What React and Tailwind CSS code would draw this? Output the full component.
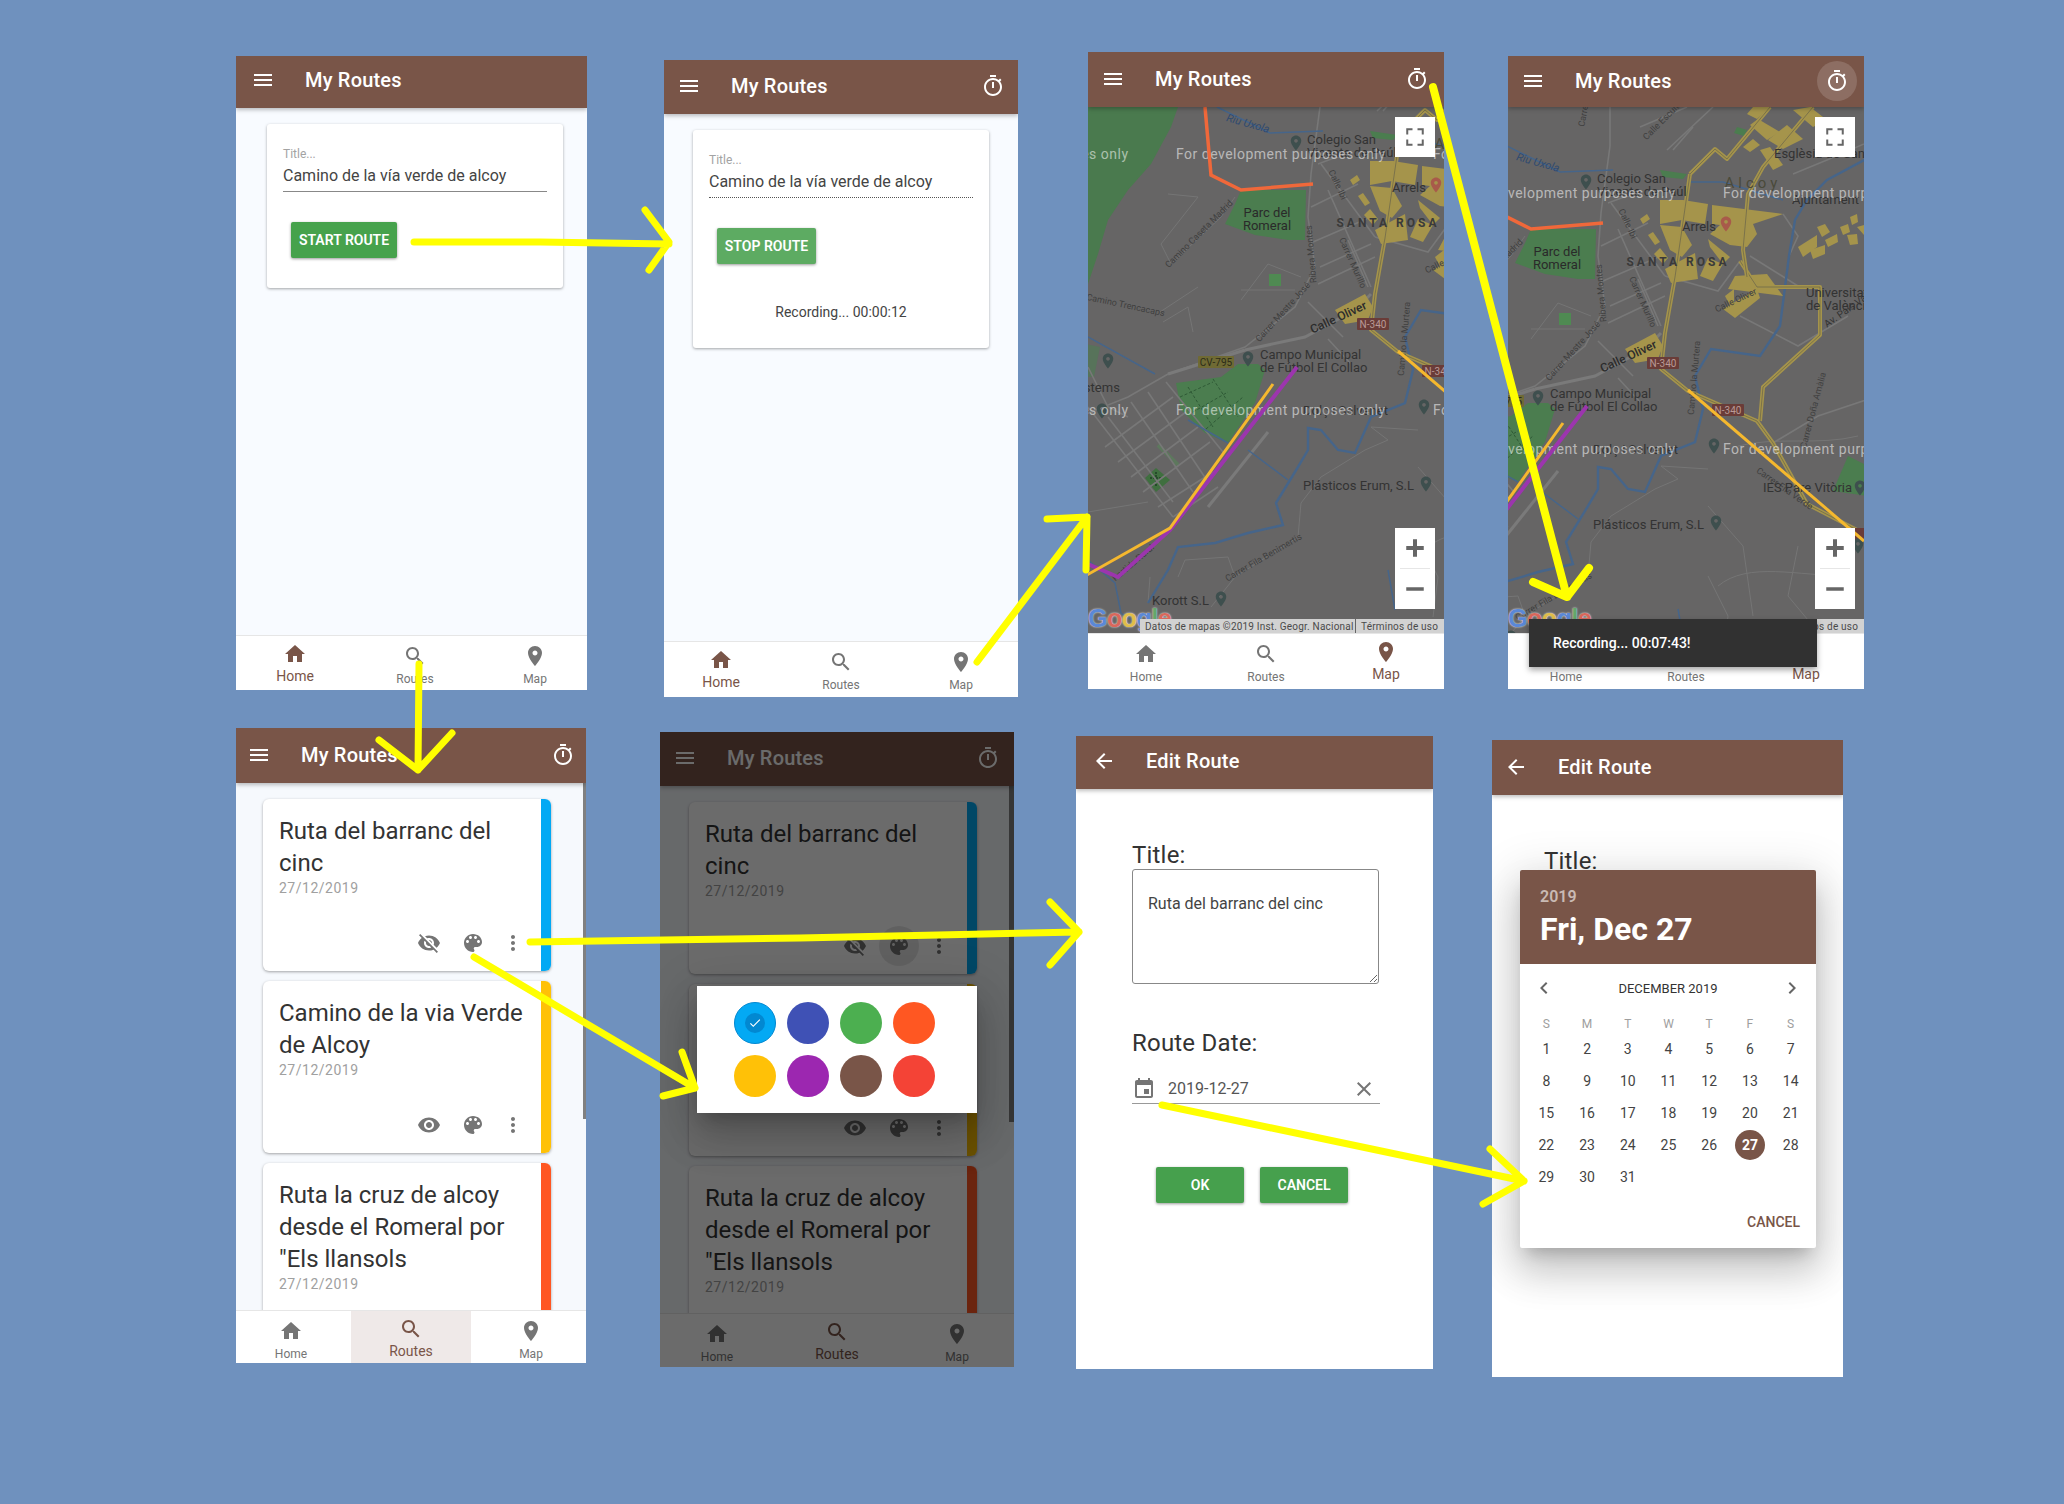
import React from 'react';

const ICONS = {
  menu: 'M3 18h18v-2H3v2zm0-5h18v-2H3v2zm0-7v2h18V6H3z',
  timer:
    'M15 1H9v2h6V1zm-4 13h2V8h-2v6zm8.03-6.61l1.42-1.42c-.43-.51-.9-.99-1.41-1.41l-1.42 1.42C16.07 4.74 14.12 4 12 4c-4.97 0-9 4.03-9 9s4.02 9 9 9 9-4.03 9-9c0-2.12-.74-4.07-1.97-5.61zM12 20c-3.87 0-7-3.13-7-7s3.13-7 7-7 7 3.13 7 7-3.13 7-7 7z',
  home: 'M10 20v-6h4v6h5v-8h3L12 3 2 12h3v8z',
  search:
    'M15.5 14h-.79l-.28-.27C15.41 12.59 16 11.11 16 9.5 16 5.91 13.09 3 9.5 3S3 5.91 3 9.5 5.91 16 9.5 16c1.61 0 3.09-.59 4.23-1.57l.27.28v.79l5 4.99L20.49 19l-4.99-5zm-6 0C7.01 14 5 11.99 5 9.5S7.01 5 9.5 5 14 7.01 14 9.5 11.99 14 9.5 14z',
  room: 'M12 2C8.13 2 5 5.13 5 9c0 5.25 7 13 7 13s7-7.75 7-13c0-3.87-3.13-7-7-7zm0 9.5c-1.38 0-2.5-1.12-2.5-2.5s1.12-2.5 2.5-2.5 2.5 1.12 2.5 2.5-1.12 2.5-2.5 2.5z',
  eye: 'M12 4.5C7 4.5 2.73 7.61 1 12c1.73 4.39 6 7.5 11 7.5s9.27-3.11 11-7.5c-1.73-4.39-6-7.5-11-7.5zM12 17c-2.76 0-5-2.24-5-5s2.24-5 5-5 5 2.24 5 5-2.24 5-5 5zm0-8c-1.66 0-3 1.34-3 3s1.34 3 3 3 3-1.34 3-3-1.34-3-3-3z',
  eyeOff:
    'M12 7c2.76 0 5 2.24 5 5 0 .65-.13 1.26-.36 1.83l2.92 2.92c1.51-1.26 2.7-2.89 3.43-4.75-1.73-4.39-6-7.5-11-7.5-1.4 0-2.74.25-3.98.7l2.16 2.16C10.74 7.13 11.35 7 12 7zM2 4.27l2.28 2.28.46.46C3.08 8.3 1.78 10.02 1 12c1.73 4.39 6 7.5 11 7.5 1.55 0 3.03-.3 4.38-.84l.42.42L19.73 22 21 20.73 3.27 3 2 4.27zM7.53 9.8l1.55 1.55c-.05.21-.08.43-.08.65 0 1.66 1.34 3 3 3 .22 0 .44-.03.65-.08l1.55 1.55c-.67.33-1.41.53-2.2.53-2.76 0-5-2.24-5-5 0-.79.2-1.53.53-2.2zm4.31-.78l3.15 3.15.02-.16c0-1.66-1.34-3-3-3l-.17.01z',
  palette:
    'M12 3c-4.97 0-9 4.03-9 9s4.03 9 9 9c.83 0 1.5-.67 1.5-1.5 0-.39-.15-.74-.39-1.01-.23-.26-.38-.61-.38-.99 0-.83.67-1.5 1.5-1.5H16c2.76 0 5-2.24 5-5 0-4.42-4.03-8-9-8zm-5.5 9c-.83 0-1.5-.67-1.5-1.5S5.67 9 6.5 9 8 9.67 8 10.5 7.33 12 6.5 12zm3-4C8.67 8 8 7.33 8 6.5S8.67 5 9.5 5s1.5.67 1.5 1.5S10.33 8 9.5 8zm5 0c-.83 0-1.5-.67-1.5-1.5S13.67 5 14.5 5s1.5.67 1.5 1.5S15.33 8 14.5 8zm3 4c-.83 0-1.5-.67-1.5-1.5S16.67 9 17.5 9s1.5.67 1.5 1.5-.67 1.5-1.5 1.5z',
  more: 'M12 8c1.1 0 2-.9 2-2s-.9-2-2-2-2 .9-2 2 .9 2 2 2zm0 2c-1.1 0-2 .9-2 2s.9 2 2 2 2-.9 2-2-.9-2-2-2zm0 6c-1.1 0-2 .9-2 2s.9 2 2 2 2-.9 2-2-.9-2-2-2z',
  back: 'M20 11H7.83l5.59-5.59L12 4l-8 8 8 8 1.41-1.41L7.83 13H20v-2z',
  event:
    'M17 12h-5v5h5v-5zM16 1v2H8V1H6v2H5c-1.11 0-1.99.9-1.99 2L3 19c0 1.1.89 2 2 2h14c1.1 0 2-.9 2-2V5c0-1.1-.9-2-2-2h-1V1h-2zm3 18H5V8h14v11z',
  close:
    'M19 6.41L17.59 5 12 10.59 6.41 5 5 6.41 10.59 12 5 17.59 6.41 19 12 13.41 17.59 19 19 17.59 13.41 12z',
  left: 'M15.41 7.41L14 6l-6 6 6 6 1.41-1.41L10.83 12z',
  right: 'M10 6L8.59 7.41 13.17 12l-4.58 4.59L10 18l6-6z',
  check: 'M9 16.17L4.83 12l-1.42 1.41L9 19 21 7l-1.41-1.41z',
  fullscreen: 'M5 10V5h5v1.6H6.6V10zM19 10V5h-5v1.6h3.4V10zM5 14v5h5v-1.6H6.6V14zM19 14v5h-5v-1.6h3.4V14z',
  plus: 'M19 13.6h-5.4V19h-3.2v-5.4H5v-3.2h5.4V5h3.2v5.4H19z',
  minus: 'M19 13.4H5v-2.8h14z',
};

const Icon = ({ name, className = 'w-6 h-6' }) => (
  <svg viewBox="0 0 24 24" fill="currentColor" className={`block shrink-0 ${className}`}>
    <path d={ICONS[name]} />
  </svg>
);

const Phone = ({ className, children }) => (
  <div className={`relative flex shrink-0 flex-col overflow-hidden ${className}`}>{children}</div>
);

const AppBar = ({ className, title = 'My Routes', icon = 'menu', timer = false, timerRing = false }) => (
  <div className={`relative z-10 flex shrink-0 items-center gap-[30px] bg-[#795548] text-white shadow-[0_2px_4px_rgba(0,0,0,0.25)] ${className}`}>
    <Icon name={icon} />
    <span className="text-[20px] font-medium tracking-[0.2px]">{title}</span>
    {timer && (
      <div className={`ml-auto flex h-10 w-10 items-center justify-center rounded-full ${timerRing ? 'bg-white/15' : ''}`}>
        <Icon name="timer" />
      </div>
    )}
  </div>
);

const NavItem = ({ icon, label, active, shaded }) => (
  <div
    className={`flex w-[120px] flex-col items-center ${active ? 'pt-[6px] text-[#795548]' : 'pt-[8px] text-[#757575]'} ${
      shaded ? 'bg-[#efe9e8]' : ''
    }`}
  >
    <Icon name={icon} />
    <span className={active ? 'mt-[1px] text-[14px] leading-[18px]' : 'mt-[3px] text-[12px] leading-[16px]'}>{label}</span>
  </div>
);

const BottomNav = ({ className, active, shaded }) => (
  <div className={`relative z-0 flex shrink-0 border-t border-[#e6e6e6] bg-white ${className}`}>
    <div className="flex w-[360px] shrink-0">
      <NavItem icon="home" label="Home" active={active === 'home'} />
      <NavItem icon="search" label="Routes" active={active === 'routes'} shaded={shaded} />
      <NavItem icon="room" label="Map" active={active === 'map'} />
    </div>
  </div>
);

const ROUTES = [
  { title: 'Ruta del barranc del cinc', bar: 'bg-[#03a9f4]', eye: 'eyeOff' },
  { title: 'Camino de la via Verde de Alcoy', bar: 'bg-[#ffc107]', eye: 'eye' },
  { title: 'Ruta la cruz de alcoy desde el Romeral por "Els llansols', bar: 'bg-[#ff5722]', eye: 'eye', tall: true },
];

const RouteCard = ({ route, ring }) => (
  <div className={`flex shrink-0 overflow-hidden rounded-[6px] bg-white shadow-[0_1px_3px_rgba(0,0,0,0.35)] ${route.tall ? 'h-[204px]' : 'h-[172px]'}`}>
    <div className="flex min-w-0 flex-1 flex-col pb-[16px] pl-[16px] pr-[16px] pt-[16px]">
      <div className="text-[24px] leading-[32px] text-[#333]">{route.title}</div>
      <div className="-mt-[1px] text-[14px] leading-[20px] tracking-[0.5px] text-[#a0a0a0]">27/12/2019</div>
      <div className="mt-auto flex justify-end text-[#757575]">
        <Icon name={route.eye} />
        <div className="relative ml-[20px]">
          {ring && <div className="absolute -inset-2 rounded-full bg-black/10" />}
          <Icon name="palette" className="relative h-6 w-6" />
        </div>
        <Icon name="more" className="ml-[16px] h-6 w-6" />
      </div>
    </div>
    <div className={`w-[10px] shrink-0 ${route.bar}`} />
  </div>
);

const RouteList = ({ className, ring, scroll }) => (
  <div className="relative min-h-0 flex-1 overflow-hidden bg-[#f6f9fd]">
    <div className={`flex w-[288px] flex-col gap-[10px] pt-[16px] ${className}`}>
      {ROUTES.map((route, i) => (
        <RouteCard key={route.title} route={route} ring={ring && i === 0} />
      ))}
    </div>
    <div className={`absolute right-0 top-0 h-[336px] bg-[#808080] ${scroll}`} />
  </div>
);

const GreenButton = ({ className, children }) => (
  <div className={`flex h-9 items-center justify-center rounded-[2px] text-[14px] font-semibold text-white shadow-[0_1px_3px_rgba(0,0,0,0.4)] ${className}`}>
    {children}
  </div>
);

const TitleCard = ({ className, dashed, children }) => (
  <div className={`w-[296px] rounded-[3px] bg-white px-[16px] pt-[22px] shadow-[0_1px_3px_rgba(0,0,0,0.35)] ${className}`}>
    <div className="text-[12px] leading-[16px] text-[#a3a3a3]">Title...</div>
    <div className={`h-[30px] pt-[2px] text-[16px] leading-[24px] text-[#444] ${dashed ? 'border-b border-dotted border-[#555]' : 'border-b border-[#888]'}`}>
      Camino de la vía verde de alcoy
    </div>
    {children}
  </div>
);

// map drawing, coordinates are the "world" of the 356x526 map pane
const ROADS = [
  'M232,-40 L232,0 L223,67 L220,110 L227,160 L207,200 L157,240 L80,267 L40,290 L-60,330',
  'M233,57 L287,130',
  'M240,83 L283,180',
  'M260,133 L280,180',
  'M223,100 L270,77',
  'M225,135 L283,110',
  'M230,177 L287,150',
  'M232,160 L283,137',
  'M230,57 L262,45',
  'M287,130 L340,145 L362,115',
  'M220,195 L255,230',
  'M240,232 L262,256',
  'M262,-19 L309,-39',
  'M289,4 L335,-39',
  'M295,4 L315,-19',
  'M415,28 L449,14 L486,-2',
  'M372,110 L420,140',
  'M405,68 L420,90 L411,110',
  'M362,170 L420,200 L470,170',
  'M395,297 L440,270 L500,250',
  'M0,260 L20,300 L40,310',
  'M20,310 L85,395',
  'M43,295 L105,385',
  'M60,285 L120,375',
  'M78,275 L135,345',
  'M17,340 L85,290',
  'M30,355 L98,305',
  'M43,370 L110,320',
  'M55,385 L122,335',
  'M70,400 L125,365',
  'M85,410 L130,380',
  'M0,300 L85,410',
];

const MAIN_ROADS = ['M157,243 L217,230 L267,203 L283,187', 'M80,267 L157,243', 'M120,400 L180,325'];

const FAINT = [
  'M80,87 L110,90 L73,137 L83,157 L133,110 L147,90',
  'M153,193 L180,157 L213,170 M153,183 L207,183',
  'M72,205 L110,180 M75,215 L100,200 L105,225',
  'M90,470 L97,453 L140,450 L147,470 L123,500',
  'M147,470 L210,430 L213,396 L233,370 L277,343 L300,333 L283,320 L330,323',
  'M0,405 L60,395',
  'M340,440 C370,415 420,430 470,430',
  'M330,430 L350,470 L345,510',
  'M360,300 C400,290 440,300 480,290',
  'M420,400 L410,450 L460,510',
  'M330,360 L365,400 L375,470',
  'M60,496 L62,470',
];

const RIVERS = [
  'M60,496 L80,463 L90,440 L127,436 L160,426 L195,418 L188,396 L210,360 L220,343 L220,321 L233,323 L250,343 L267,346 L283,310 L317,296 L325,263 L317,230 L333,203 L382,210 L402,180 L411,110 L417,74 L429,54 L449,34 L490,12',
  'M160,343 L200,373',
  'M0,453 L27,476 L33,506 L43,513',
  'M0,230 L67,267',
  'M100,313 L140,336',
  'M129,0 L182,26 L235,24',
  'M300,463 L307,503',
  'M312,36 L345,36 L405,54',
];

const HIGHWAY = [
  'M312,28 L297,131 L287,187 L283,223 L310,245 L379,275 L395,297 L429,358 L479,384 L520,400',
  'M362,115 L379,141 L442,141 L442,189 L385,241 L382,275',
  'M312,28 L337,3 L349,13 L392,-39',
  'M435,-39 L385,21 L370,48 L365,104 L369,131',
];

const BLOCKS = [
  '282,54 305,54 330,58 327,78 304,74 282,78',
  '334,59 405,68 375,78 379,88 369,101 352,99 332,88 342,79 334,78',
  '282,79 304,81 314,99 304,111 292,104',
  '269,68 272,73 265,78 262,73',
  '275,86 282,96 277,99 270,89',
  '282,102 290,112 285,118 276,108',
  '330,93 352,111 345,118 332,101',
  '287,123 317,107 320,133 293,137',
  '380,-27 402,-14 389,-6 372,-21',
  '409,-21 425,-7 405,3 390,-6',
  '415,-36 432,-39 449,-26 435,-19',
  '365,1 375,-7 382,-1 372,6',
  '382,4 392,1 405,19 395,24',
  '375,-39 392,-39 379,-27 369,-32',
  '420,101 439,89 439,101 425,111',
  '439,81 447,78 452,86 444,91',
  '447,94 459,88 460,96 450,101',
  '432,104 447,99 447,108 435,113',
  '462,81 470,78 472,86 465,89',
  '472,71 479,68 480,76 474,79',
  '469,89 479,88 480,98 472,99',
  '479,81 486,79 486,89',
  '247,203 277,187 285,200 280,213 257,217',
  '347,150 356,143 356,167',
  '357,130 389,128 405,150 350,143',
  '345,163 379,143 382,152 357,172',
  '330,112 345,118 335,135 322,130',
];

const PARKS = [
  ['M-60,-60 L95,-60 L90,0 L83,20 L63,57 L40,83 L20,113 L10,147 L0,177 L-60,220 Z', '#4a7a4e'],
  ['M153,83 L218,83 L217,133 L200,133 L167,128 L137,117 L147,97 Z', '#4b7d4f'],
  ['M88,276 L133,270 L150,257 L170,257 L177,263 L167,296 L140,336 L117,326 L93,303 Z', '#4b7d4f'],
  ['M68,361 L82,373 L68,385 L57,371 Z', '#3f6f3f'],
  ['M181,167 H193 V179 H181 Z', '#4f8a52'],
  ['M455,345 L470,310 L490,320 L490,350 Z', '#4b7d4f'],
  ['M-60,225 L12,240 L6,270 L-60,270 Z', '#57735a'],
  ['M282,24 L309,28 L305,33 L285,31 Z', '#4b7d4f'],
  ['M359,-19 L369,-16 L366,-10 L356,-13 Z', '#4b7d4f'],
];

const Poi = ({ x, y, fill = '#3e4f4e' }) => (
  <g transform={`translate(${x - 9},${y - 9}) scale(0.75)`}>
    <path d={ICONS.room} fill={fill} />
  </g>
);

const PLACES = [
  ['Colegio San', 219, 37],
  ['Vicente de Paúl', 219, 50],
  ['Arrels', 304, 85],
  ['Campo Municipal', 172, 252],
  ['de Fútbol El Collao', 172, 265],
  ['Plásticos Erum, S.L', 215, 383],
  ['Korott S.L', 64, 498],
  ['Dolç i Salvenet', 215, 308],
  ['Esglèsia de San', 396, 12],
  ['Ajuntament', 414, 58],
  ['Universitat', 428, 151],
  ['de València', 428, 164],
  ['IES Pare Vitòria', 385, 346],
  ['Systems', -18, 285],
  ['Trabi', -30, 257],
];

const STREETS = [
  ['Calle Ibi', 247, 79, 65],
  ['Camino Caseta Madrid', 113, 129, -45],
  ['Carrer Murillo', 262, 157, 66],
  ['Carrer Mestre José', 197, 207, -48],
  ['Ribera Montes', 226, 147, -95],
  ['Camino Trencacaps', 37, 201, 12],
  ['Carrer Fila Benimertis', 177, 453, -30],
  ['Partida Rural', 47, 458, -40],
  ['Camino la Murtera', 319, 232, -85],
  ['Carrer Fila Verde', 405, 345, 35],
  ['Carrer Doña Amàlia', 438, 265, -75],
  ['Calle Oliver', 359, 157, -25],
  ['Calle Escultor', 288, -25, -45],
  ['Carrer Mur', 210, -40, -80],
];

const MapPane = ({ viewBox }) => (
  <div className="relative min-h-0 flex-1 overflow-hidden bg-[#666565]">
    <svg viewBox={viewBox} className="block h-[526px] w-[356px]">
      {PARKS.map(([d, fill]) => (
        <path key={d} d={d} fill={fill} />
      ))}
      <path d="M92,290 L125,275 M105,305 L140,285 M118,322 L155,290 M100,280 L125,320 M125,272 L150,310" fill="none" stroke="#2f5a36" strokeWidth="1" strokeDasharray="3 2" />
      <path d="M62,371 L74,371 M68,365 L68,380" stroke="#264a2a" strokeWidth="2" strokeDasharray="2 1" />
      <path d="M70,338 L90,358" stroke="#5d785d" strokeWidth="4" />
      {FAINT.map((d) => (
        <path key={d} d={d} fill="none" stroke="#757575" strokeWidth="1" />
      ))}
      {ROADS.map((d) => (
        <path key={d} d={d} fill="none" stroke="#787878" strokeWidth="1.6" />
      ))}
      {MAIN_ROADS.map((d) => (
        <path key={d} d={d} fill="none" stroke="#7a7a7a" strokeWidth="3" />
      ))}
      {RIVERS.map((d, i) => (
        <path key={d} d={d} fill="none" stroke="#46658a" strokeWidth={i === 0 ? 2.4 : 1.5} />
      ))}
      {BLOCKS.map((p) => (
        <polygon key={p} points={p} fill="#a5944b" />
      ))}
      {HIGHWAY.map((d) => (
        <g key={d} fill="none" strokeLinejoin="round">
          <path d={d} stroke="#a5944b" strokeWidth="4" />
          <path d={d} stroke="#70694a" strokeWidth="0.8" />
        </g>
      ))}

      <rect x="110" y="249" width="36" height="12" rx="1" fill="#6f6a34" />
      <text x="128" y="259" textAnchor="middle" fontSize="10" fill="#2c2c18">CV-795</text>
      <rect x="269" y="211" width="32" height="12" rx="1" fill="#6a3c38" />
      <text x="285" y="221" textAnchor="middle" fontSize="10" fill="#b99a96">N-340</text>
      <rect x="334" y="258" width="32" height="12" rx="1" fill="#6a3c38" />
      <text x="350" y="268" textAnchor="middle" fontSize="10" fill="#b99a96">N-340</text>
      <rect x="472" y="382" width="32" height="12" rx="1" fill="#6a3c38" />

      {STREETS.map(([t, x, y, r]) => (
        <text key={t} x={x} y={y} fontSize="9" fill="#3f3f3f" textAnchor="middle" transform={`rotate(${r} ${x} ${y})`}>
          {t}
        </text>
      ))}
      {PLACES.map(([t, x, y]) => (
        <text key={t} x={x} y={y} fontSize="13" fill="#333">
          {t}
        </text>
      ))}
      <text x="179" y="110" textAnchor="middle" fontSize="13" fill="#2a2a2a">Parc del</text>
      <text x="179" y="123" textAnchor="middle" fontSize="13" fill="#2a2a2a">Romeral</text>
      <text x="300" y="120" textAnchor="middle" fontSize="12" fontWeight="700" letterSpacing="3" fill="#3a3a3a">SANTA ROSA</text>
      <text x="375" y="42" textAnchor="middle" fontSize="15" letterSpacing="4" fill="#4a4a3a">Alcoy</text>
      <text x="252" y="214" textAnchor="middle" fontSize="12" fontWeight="500" fill="#2c2c2c" transform="rotate(-25 252 214)">Calle Oliver</text>
      <text x="480" y="160" textAnchor="middle" fontSize="10" fill="#333" transform="rotate(-35 480 160)">Av. País Valencià</text>
      <text x="159" y="20" textAnchor="middle" fontSize="11" fontStyle="italic" fill="#2f4a70" transform="rotate(16 159 20)">Riu Uxola</text>

      <Poi x={208} y={36} />
      <Poi x={160} y={252} />
      <Poi x={20} y={254} />
      <Poi x={14} y={304} />
      <Poi x={336} y={300} />
      <Poi x={338} y={377} />
      <Poi x={133} y={492} />
      <Poi x={348} y={78} fill="#a85a4a" />
      <Poi x={482} y={342} />
      <Poi x={480} y={400} />

      {[-169, 88, 345, 602].map((x) => (
        <g key={x} fontSize="14" fill="#ffffff" fillOpacity="0.55">
          <text x={x} y="52" textLength="209">For development purposes only</text>
          <text x={x} y="308" textLength="209">For development purposes only</text>
        </g>
      ))}

      <path d="M117,0 L123,68 L153,83 L225,77" fill="none" stroke="#f0683a" strokeWidth="3.5" />
      <path d="M-40,440 L30,470 L82,423 L209,260" fill="none" stroke="#9c35ae" strokeWidth="4" />
      <path d="M-40,490 L82,421 L185,277" fill="none" stroke="#f5b82e" strokeWidth="3" />
      <path d="M310,244 L486,395" fill="none" stroke="#f5b82e" strokeWidth="3" />
    </svg>

    <div className="absolute bottom-0 left-0 font-['Liberation_Sans',sans-serif] text-[25px] font-bold leading-[30px] tracking-[-0.5px] [text-shadow:0_0_2px_#fff]">
      <span className="text-[#5b88d6]">G</span>
      <span className="text-[#d9685c]">o</span>
      <span className="text-[#e0bd4a]">o</span>
      <span className="text-[#5b88d6]">g</span>
      <span className="text-[#63a86c]">l</span>
      <span className="text-[#d9685c]">e</span>
    </div>
    <div className="absolute bottom-0 right-0 flex h-[14px] w-[304px] items-center bg-[#d2d2d2] pl-[5px] text-[10px] tracking-[0.2px] text-[#4a4a4a]">
      <span className="w-[210px] shrink-0 whitespace-nowrap">Datos de mapas ©2019 Inst. Geogr. Nacional</span>
      <span className="h-full w-px shrink-0 bg-[#666]" />
      <span className="ml-[5px] whitespace-nowrap">Términos de uso</span>
    </div>
    <div className="absolute right-[9px] top-[10px] flex h-10 w-10 items-center justify-center bg-white text-[#666]">
      <Icon name="fullscreen" className="h-[30px] w-[30px]" />
    </div>
    <div className="absolute bottom-[24px] right-[9px] flex h-[81px] w-10 flex-col items-center bg-white text-[#666]">
      <div className="flex h-10 items-center">
        <Icon name="plus" className="h-[30px] w-[30px]" />
      </div>
      <div className="h-px w-[30px] bg-[#e6e6e6]" />
      <div className="flex h-10 items-center">
        <Icon name="minus" className="h-[30px] w-[30px]" />
      </div>
    </div>
  </div>
);

const SWATCHES = ['bg-[#03a9f4]', 'bg-[#3f51b5]', 'bg-[#4caf50]', 'bg-[#ff5722]', 'bg-[#ffc107]', 'bg-[#9c27b0]', 'bg-[#795548]', 'bg-[#f44336]'];

const ColorDialog = () => (
  <div className="absolute left-[37px] top-[254px] z-30 grid h-[127px] w-[280px] grid-cols-[repeat(4,42px)] content-center justify-center gap-[11px] bg-white pr-[5px] shadow-[0_11px_15px_-7px_rgba(0,0,0,0.2),0_24px_38px_3px_rgba(0,0,0,0.14),0_9px_46px_8px_rgba(0,0,0,0.12)]">
    {SWATCHES.map((color, i) => (
      <div key={color} className={`flex h-[42px] w-[42px] items-center justify-center rounded-full ${color} ${i === 0 ? 'border border-[#0288d1]' : ''}`}>
        {i === 0 && (
          <div className="flex h-[20px] w-[20px] items-center justify-center rounded-full bg-[#0288d1] text-white">
            <Icon name="check" className="h-[14px] w-[14px]" />
          </div>
        )}
      </div>
    ))}
  </div>
);

const DatePicker = () => {
  const days = Array.from({ length: 31 }, (_, i) => i + 1);
  return (
    <div className="absolute left-[28px] top-[130px] z-20 flex h-[378px] w-[296px] flex-col overflow-hidden rounded-[2px] bg-white shadow-[0_11px_15px_-7px_rgba(0,0,0,0.2),0_24px_38px_3px_rgba(0,0,0,0.14),0_9px_46px_8px_rgba(0,0,0,0.12)]">
      <div className="h-[94px] shrink-0 bg-[#795548] pl-[20px] pt-[17px] text-white">
        <div className="text-[16px] font-semibold leading-[20px] text-[#c9bab4]">2019</div>
        <div className="mt-[2px] text-[32px] font-bold leading-[40px]">Fri, Dec 27</div>
      </div>
      <div className="flex h-[48px] shrink-0 items-center justify-between px-[12px] text-[#666]">
        <Icon name="left" />
        <span className="pt-[1px] text-[13px] text-[#333]">DECEMBER 2019</span>
        <Icon name="right" />
      </div>
      <div className="ml-[6px] grid w-[285px] grid-cols-7">
        {['S', 'M', 'T', 'W', 'T', 'F', 'S'].map((d, i) => (
          <div key={i} className="flex h-[21px] items-center justify-center pt-[3px] text-[12px] text-[#9e9e9e]">
            {d}
          </div>
        ))}
        {days.map((d) => (
          <div key={d} className="flex h-[32px] items-center justify-center text-[14px] text-[#444]">
            {d === 27 ? (
              <span className="flex h-[30px] w-[30px] items-center justify-center rounded-full bg-[#795548] font-bold text-white">27</span>
            ) : (
              d
            )}
          </div>
        ))}
      </div>
      <div className="mt-[11px] pr-[16px] text-right text-[14px] font-medium leading-[36px] text-[#795548]">CANCEL</div>
    </div>
  );
};

const Arrows = () => (
  <svg viewBox="0 0 2064 1504" className="absolute inset-0 z-50 h-[1504px] w-[2064px]" fill="none" stroke="#ffff00" strokeWidth="7" strokeLinecap="round" strokeLinejoin="round">
    <path d="M414,242 L540,242 L669,244 M645,210 L669,242 L649,270" />
    <path d="M977,662 L1087,517 M1047,519 L1087,517 L1086,570" />
    <path d="M1433,87 L1567,597 M1533,582 L1567,597 L1589,568" strokeWidth="8" />
    <path d="M419,664 L418,770 M379,740 L418,770 L452,733" />
    <path d="M474,957 L695,1088 M682,1052 L695,1088 L663,1096" />
    <path d="M530,942 L800,938 L1079,932 M1050,902 L1079,932 L1050,965" />
    <path d="M1162,1105 L1524,1181 M1490,1149 L1524,1181 L1483,1204" />
  </svg>
);

export default function App() {
  return (
    <div className="relative h-[1504px] w-[2064px] overflow-hidden bg-[#6f91be] font-['Roboto',sans-serif]">
      <div className="flex h-[720px] items-start pl-[236px]">
        <Phone className="mt-[56px] h-[634px] w-[351px] bg-[#f8fbff]">
          <AppBar className="h-[52px] pb-[4px] pl-[15px]" />
          <div className="min-h-0 flex-1 pl-[31px] pt-[16px]">
            <TitleCard className="h-[164px]">
              <GreenButton className="ml-[8px] mt-[30px] w-[106px] bg-[#46a24c]">START ROUTE</GreenButton>
            </TitleCard>
          </div>
          <BottomNav className="h-[55px] ml-[-1px]" active="home" />
        </Phone>

        <Phone className="ml-[77px] mt-[60px] h-[637px] w-[354px] bg-[#f8fbff]">
          <AppBar className="h-[54px] pb-[2px] pl-[13px] pr-[5px]" timer />
          <div className="min-h-0 flex-1 pl-[29px] pt-[16px]">
            <TitleCard className="h-[218px]" dashed>
              <GreenButton className="ml-[8px] mt-[30px] w-[99px] bg-[#5dab62]">STOP ROUTE</GreenButton>
              <div className="mt-[38px] text-center text-[14px] leading-[20px] text-[#444]">Recording... 00:00:12</div>
            </TitleCard>
          </div>
          <BottomNav className="h-[56px] ml-[-3px]" active="home" />
        </Phone>

        <Phone className="ml-[70px] mt-[52px] h-[637px] w-[356px]">
          <AppBar className="h-[55px] pb-[2px] pl-[13px] pr-[7px]" timer />
          <MapPane viewBox="0 0 356 526" />
          <BottomNav className="h-[56px] ml-[-2px]" active="map" />
        </Phone>

        <Phone className="ml-[64px] mt-[56px] h-[633px] w-[356px]">
          <AppBar className="h-[51px] pb-[2px] pl-[13px] pr-[7px]" timer timerRing />
          <MapPane viewBox="130 -39 356 526" />
          <BottomNav className="h-[56px] ml-[-2px]" active="map" />
          <div className="absolute left-[21px] top-[563px] z-20 flex h-[48px] w-[288px] items-center bg-[#313131] pl-[24px] text-[14px] font-medium text-white shadow-[0_3px_6px_rgba(0,0,0,0.35)]">
            Recording... 00:07:43!
          </div>
        </Phone>
      </div>

      <div className="flex items-start pl-[236px]">
        <Phone className="mt-[8px] h-[635px] w-[350px]">
          <AppBar className="h-[55px] pb-[2px] pl-[11px] pr-[3px]" timer />
          <RouteList className="ml-[27px]" scroll="w-[3px]" />
          <BottomNav className="h-[53px] ml-[-5px]" active="routes" shaded />
        </Phone>

        <Phone className="ml-[74px] mt-[12px] h-[635px] w-[354px]">
          <AppBar className="h-[54px] pb-[2px] pl-[13px] pr-[6px]" timer />
          <RouteList className="ml-[29px]" scroll="w-[5px]" ring />
          <BottomNav className="h-[54px] ml-[-3px]" active="routes" />
          <div className="absolute inset-0 z-20 bg-black/[0.58]" />
          <ColorDialog />
        </Phone>

        <Phone className="ml-[62px] mt-[16px] h-[633px] w-[357px] bg-white">
          <AppBar className="h-[53px] pb-[3px] pl-[16px]" title="Edit Route" icon="back" />
          <div className="min-h-0 flex-1 pl-[56px] pt-[54px] text-[#333]">
            <div className="mb-[2px] text-[24px] leading-[24px] tracking-[0.2px]">Title:</div>
            <textarea
              readOnly
              value="Ruta del barranc del cinc"
              className="block h-[115px] w-[247px] rounded-[3px] border border-[#888] px-[15px] py-[24px] text-[16px] leading-[20px] text-[#444] outline-none"
            />
            <div className="mt-[47px] text-[24px] leading-[24px] tracking-[0.2px]">Route Date:</div>
            <div className="mt-[20px] flex h-[29px] w-[248px] items-start border-b border-[#999] pt-[2px] text-[#757575]">
              <Icon name="event" />
              <span className="ml-[12px] text-[16px] leading-[24px] text-[#555]">2019-12-27</span>
              <Icon name="close" className="ml-auto mr-[4px] h-6 w-6" />
            </div>
            <div className="ml-[24px] mt-[63px] flex gap-[16px]">
              <GreenButton className="w-[88px] bg-[#46a04d]">OK</GreenButton>
              <GreenButton className="w-[88px] bg-[#46a04d]">CANCEL</GreenButton>
            </div>
          </div>
        </Phone>

        <Phone className="ml-[59px] mt-[20px] h-[637px] w-[351px] bg-white">
          <AppBar className="h-[55px] pb-[2px] pl-[12px]" title="Edit Route" icon="back" />
          <div className="min-h-0 flex-1 pl-[52px] pt-[54px] text-[24px] leading-[24px] tracking-[0.2px] text-[#333]">Title:</div>
          <DatePicker />
        </Phone>
      </div>

      <Arrows />
    </div>
  );
}
